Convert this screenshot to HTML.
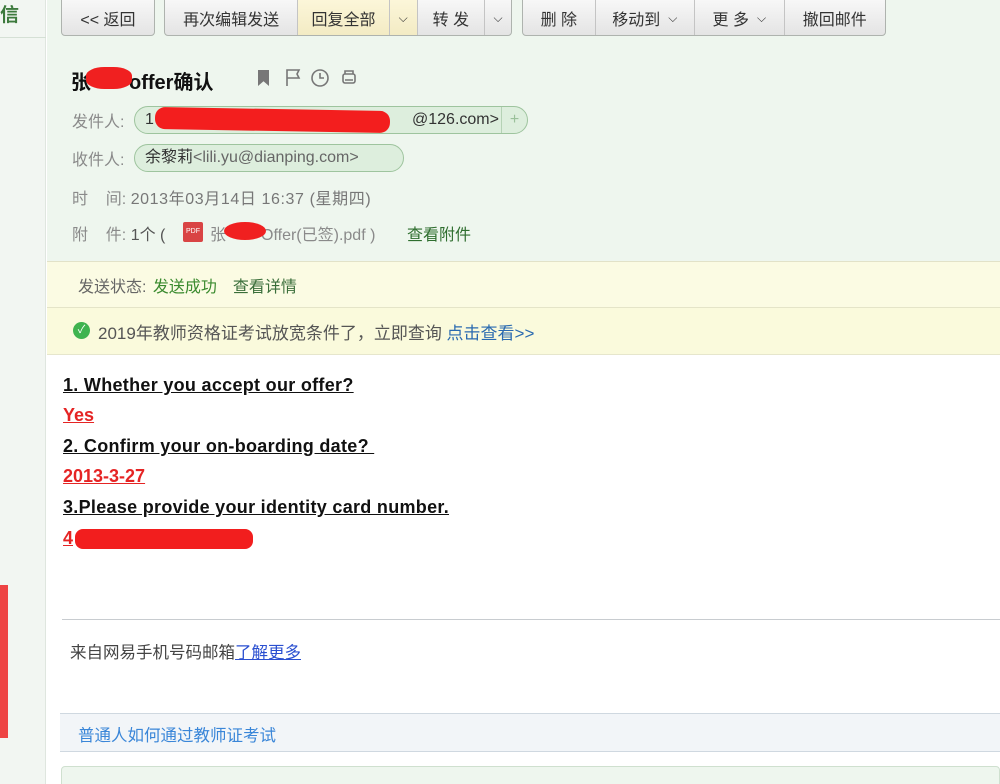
<!DOCTYPE html>
<html><head><meta charset="utf-8"><style>
*{margin:0;padding:0;box-sizing:border-box}
html,body{width:1000px;height:784px;overflow:hidden}
body{background:#fff;font-family:"Liberation Sans","Noto Sans CJK SC",sans-serif;position:relative;color:#333}
.a{position:absolute;white-space:nowrap}
.side{left:0;top:0;width:46px;height:784px;background:#f2f6f2;border-right:1px solid #dfe6df}
.hdr{left:47px;top:0;width:953px;height:261px;background:#eef6ee}
.btn{position:absolute;top:-6px;height:42px;border:1px solid #aeb3ae;border-radius:4px;background:linear-gradient(#fafafa,#e4e4e4);display:flex;overflow:hidden}
.btn div{height:100%;display:flex;align-items:center;justify-content:center;font-size:16px;color:#333;padding-top:6px;border-right:1px solid #c4c4c4}
.btn div:last-child{border-right:none}
.lab{color:#8a8a8a;font-size:16px}
.pill{position:absolute;height:28px;border:1px solid #9ec49e;border-radius:14px;background:#ddeedd;font-size:16px;line-height:26px;padding-left:10px}
.q{font-weight:bold;font-size:18px;text-decoration:underline;color:#111;left:63px;letter-spacing:0.3px}
.r{font-weight:bold;font-size:18px;text-decoration:underline;color:#e52424;left:63px}
</style></head><body>
<div class="a side"></div>
<div class="a" style="left:0;top:0;font-size:19px;font-weight:bold;color:#3d7a3d;left:0">信</div>
<div class="a" style="left:0;top:37px;width:46px;height:1px;background:#d5e0d5"></div>
<div class="a" style="left:0;top:585px;width:8px;height:153px;background:#ee4444"></div>
<div class="a hdr"></div>
<div class="btn" style="left:61px;width:94px"><div style="width:94px">&lt;&lt; 返回</div></div>
<div class="btn" style="left:164px;width:348px"><div style="width:134px">再次编辑发送</div><div style="width:92px;background:linear-gradient(#fdf8dc,#f3ebc4)">回复全部</div><div style="width:28px;background:linear-gradient(#fdf8dc,#f3ebc4);font-size:12px">⌵</div><div style="width:68px">转 发</div><div style="width:26px;font-size:12px">⌵</div></div>
<div class="btn" style="left:522px;width:364px"><div style="width:73px">删 除</div><div style="width:100px">移动到 <span style="font-size:12px;margin-left:8px">⌵</span></div><div style="width:90px">更 多 <span style="font-size:12px;margin-left:8px">⌵</span></div><div style="width:101px">撤回邮件</div></div>
<div class="a" style="left:71px;top:66px;font-size:20px;font-weight:bold;color:#111">张<span style="display:inline-block;width:38px"></span>offer确认</div>
<div class="a" style="left:86px;top:67px;width:46px;height:22px;background:#f02020;border-radius:40%"></div>
<div class="a" style="left:258px;top:70px;width:11px;height:16px;background:#777;clip-path:polygon(0 0,100% 0,100% 100%,50% 70%,0 100%)"></div>
<svg class="a" style="left:285px;top:68px" width="80" height="20" viewBox="0 0 80 20" fill="none" stroke="#777" stroke-width="1.6"><path d="M2 18V2h12l-2 4 2 4H2"/><circle cx="35" cy="10" r="8"/><path d="M35 5v5h4"/><rect x="58" y="6" width="12" height="9" rx="2"/><path d="M60 6V3h8v3M60 12h8"/></svg>
<div class="a lab" style="left:72px;top:108px">发件人:</div>
<div class="pill" style="left:134px;top:106px;width:394px">1<span style="position:absolute;left:277px">@126.com&gt;</span><span style="position:absolute;left:366px;top:0;width:26px;border-left:1px solid #b5d2b5;text-align:center;color:#9ac09a">+</span></div>
<div class="a" style="left:155px;top:109px;width:235px;height:22px;background:#f31e1e;border-radius:10px;transform:rotate(1deg)"></div>
<div class="a lab" style="left:72px;top:146px">收件人:</div>
<div class="pill" style="left:134px;top:144px;width:270px">余黎莉<span style="color:#666">&lt;lili.yu@dianping.com&gt;</span></div>
<div class="a lab" style="left:72px;top:185px">时&nbsp;&nbsp;&nbsp;&nbsp;间: <span style="color:#777;letter-spacing:0.6px">2013年03月14日 16:37 (星期四)</span></div>
<div class="a lab" style="left:72px;top:221px">附&nbsp;&nbsp;&nbsp;&nbsp;件: <span style="color:#555">1个 (</span></div>
<div class="a" style="left:183px;top:222px;width:20px;height:20px;background:#d94444;border-radius:2px;color:#fff;font-size:7px;line-height:20px;text-align:center">PDF</div>
<div class="a lab" style="left:210px;top:221px">张<span style="display:inline-block;width:35px"></span>Offer(已签).pdf )</div>
<div class="a" style="left:224px;top:222px;width:42px;height:18px;background:#f02020;border-radius:50%"></div>
<div class="a" style="left:407px;top:221px;font-size:16px;color:#2f6e2f">查看附件</div>
<div class="a" style="left:47px;top:261px;width:953px;height:47px;background:#fbfbe3;border-top:1px solid #e2e2c8;border-bottom:1px solid #e4e4c8"></div>
<div class="a" style="left:78px;top:273px;font-size:16px;color:#666">发送状态: <span style="color:#3a8a2e;margin-left:2px">发送成功</span><span style="color:#3a6e3a;margin-left:16px">查看详情</span></div>
<div class="a" style="left:47px;top:308px;width:953px;height:47px;background:#fafadc;border-bottom:1px solid #e6e6cc"></div>
<div class="a" style="left:73px;top:322px;width:17px;height:17px;border-radius:50%;background:#3fb34f;color:#fff;font-size:11px;line-height:17px;text-align:center">✓</div>
<div class="a" style="left:98px;top:319px;font-size:17px;color:#555">2019年教师资格证考试放宽条件了，立即查询 <span style="color:#2a6ab0">点击查看&gt;&gt;</span></div>
<div class="a q" style="top:375px">1. Whether you accept our offer?</div>
<div class="a r" style="top:405px">Yes</div>
<div class="a q" style="top:436px">2. Confirm your on-boarding date?&nbsp;</div>
<div class="a r" style="top:466px">2013-3-27</div>
<div class="a q" style="top:497px">3.Please provide your identity card number.</div>
<div class="a r" style="top:528px">4<span style="display:inline-block;width:178px"></span></div>
<div class="a" style="left:75px;top:529px;width:178px;height:20px;background:#f21e1e;border-radius:8px"></div>
<div class="a" style="left:62px;top:619px;width:938px;height:1px;background:#c8ccd0"></div>
<div class="a" style="left:70px;top:639px;font-size:16.5px;color:#444">来自网易手机号码邮箱<span style="color:#2a4fd0;text-decoration:underline">了解更多</span></div>
<div class="a" style="left:60px;top:713px;width:940px;height:39px;background:#f2f5f8;border-top:1px solid #cfd8e0;border-bottom:1px solid #cfd8e0"></div>
<div class="a" style="left:78px;top:722px;font-size:16.5px;color:#3a86d8">普通人如何通过教师证考试</div>
<div class="a" style="left:61px;top:766px;width:939px;height:30px;background:#eef6ee;border:1px solid #cfe0cf;border-radius:4px"></div>
</body></html>
